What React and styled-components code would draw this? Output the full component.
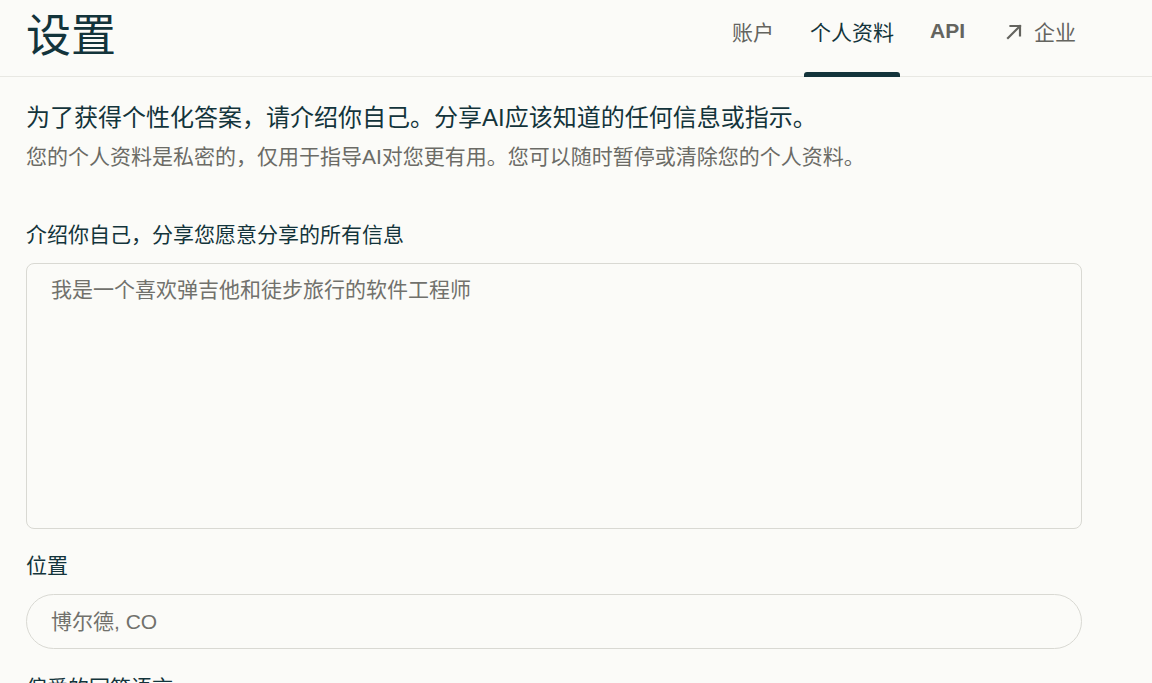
import React from "react";
import styled, { createGlobalStyle } from "styled-components";

const Global = createGlobalStyle`
  html, body { margin: 0; padding: 0; background: #fbfbf8; }
  body { font-family: "Liberation Sans", "Noto Sans CJK SC", sans-serif; color: #13343b; overflow: hidden; }
  * { box-sizing: border-box; }
`;

const Page = styled.div`
  width: 1152px;
  height: 683px;
  overflow: hidden;
  background: #fbfbf8;
`;

const Header = styled.header`
  height: 77px;
  display: flex;
  align-items: stretch;
  justify-content: space-between;
  padding: 0 70px 0 26px;
  border-bottom: 1px solid #e8e8e3;
`;

const Title = styled.h1`
  margin: 0;
  align-self: center;
  font-size: 45px;
  font-weight: 400;
  line-height: 1;
  padding-bottom: 3px;
  color: #13343b;
`;

const Tabs = styled.nav`
  display: flex;
  align-items: stretch;
  gap: 24px;
`;

const Tab = styled.a`
  position: relative;
  display: flex;
  align-items: center;
  gap: 10px;
  padding: 0 6px 14px;
  font-size: 21px;
  font-weight: ${(p) => (p.$bold ? 700 : 400)};
  color: ${(p) => (p.$active ? "#13343b" : "#64645f")};
  cursor: pointer;
  &::after {
    content: "";
    display: ${(p) => (p.$active ? "block" : "none")};
    position: absolute;
    left: 0;
    right: 0;
    bottom: -1px;
    height: 5px;
    background: #13343b;
    border-radius: 3px 3px 0 0;
  }
`;

const Main = styled.main`
  padding: 24px 70px 0 26px;
  display: flex;
  flex-direction: column;
`;

const Lead = styled.p`
  margin: 0;
  font-size: 24px;
  line-height: 33px;
  color: #13343b;
`;

const Sub = styled.p`
  margin: 8px 0 0;
  font-size: 21px;
  line-height: 29px;
  color: #6b6b66;
`;

const Field = styled.div`
  display: flex;
  flex-direction: column;
  gap: ${(p) => p.$gap || 13}px;
  margin-top: ${(p) => p.$top || 23}px;
`;

const Label = styled.label`
  font-size: 21px;
  line-height: 30px;
  color: #13343b;
`;

const TextArea = styled.textarea`
  width: 100%;
  height: 266px;
  resize: none;
  border: 1px solid #d9d9d3;
  border-radius: 8px;
  background: #fbfbf8;
  padding: 11px 24px;
  font-family: "Liberation Sans", "Noto Sans CJK SC", sans-serif;
  font-size: 21px;
  line-height: 30px;
  color: #13343b;
  outline: none;
  &::placeholder { color: #71716c; }
`;

const Input = styled.input`
  width: 100%;
  height: 55px;
  border: 1px solid #d9d9d3;
  border-radius: 28px;
  background: #fbfbf8;
  padding: 0 24px;
  font-family: "Liberation Sans", "Noto Sans CJK SC", sans-serif;
  font-size: 21px;
  color: #13343b;
  outline: none;
  &::placeholder { color: #71716c; }
`;

const Arrow = () => (
  <svg width="23" height="18" viewBox="0 0 23 18" fill="none" stroke="currentColor" strokeWidth="2.2" strokeLinecap="square">
    <path d="M7 16 L19 4" />
    <path d="M9.5 4 H19 V13.5" />
  </svg>
);

export default function App() {
  return (
    <Page>
      <Global />
      <Header>
        <Title>设置</Title>
        <Tabs>
          <Tab>账户</Tab>
          <Tab $active>个人资料</Tab>
          <Tab $bold>API</Tab>
          <Tab><Arrow />企业</Tab>
        </Tabs>
      </Header>
      <Main>
        <Lead>为了获得个性化答案，请介绍你自己。分享AI应该知道的任何信息或指示。</Lead>
        <Sub>您的个人资料是私密的，仅用于指导AI对您更有用。您可以随时暂停或清除您的个人资料。</Sub>
        <Field $top={49}>
          <Label>介绍你自己，分享您愿意分享的所有信息</Label>
          <TextArea placeholder="我是一个喜欢弹吉他和徒步旅行的软件工程师" />
        </Field>
        <Field $top={22} $gap={13}>
          <Label>位置</Label>
          <Input placeholder="博尔德, CO" />
        </Field>
        <Field $top={24}>
          <Label>偏爱的回答语言</Label>
        </Field>
      </Main>
    </Page>
  );
}
